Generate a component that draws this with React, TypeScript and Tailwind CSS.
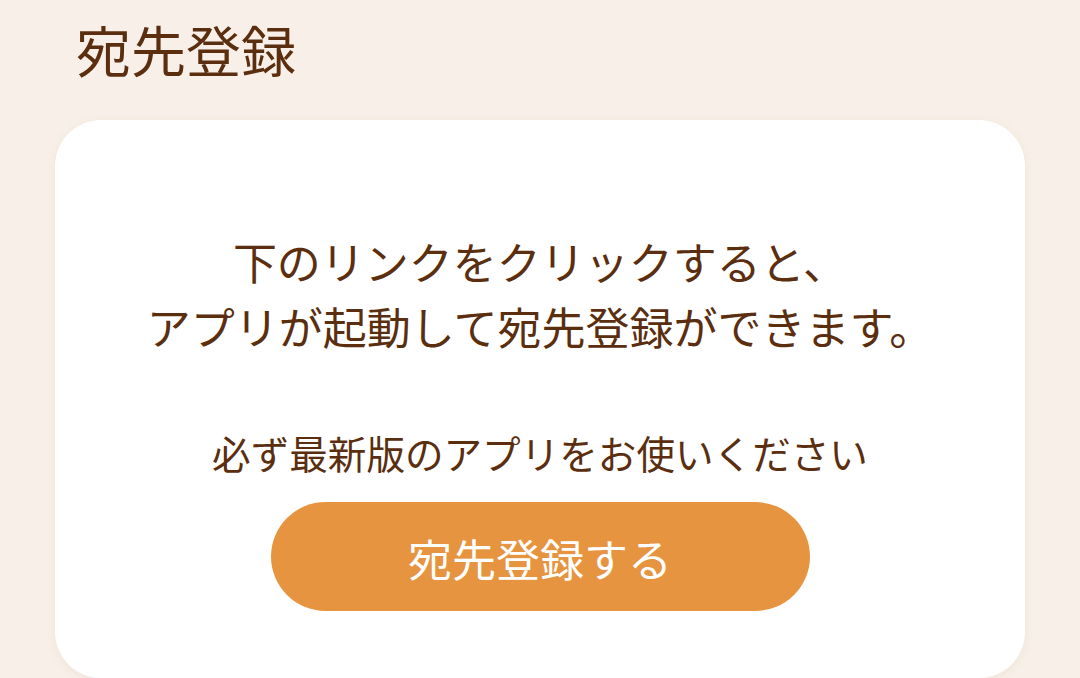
import React from "react";

export default function App() {
  return (
    <div
      className="w-[1080px] h-[678px] overflow-hidden bg-[#f8f0e8] text-[#5a2e0e]"
      style={{ fontFamily: '"Noto Sans CJK JP", "Noto Sans", sans-serif' }}
    >
      <h1 className="pl-[76px] pt-[21px] text-[55px] leading-[55px] font-normal">宛先登録</h1>
      <div className="mx-[55px] mt-[44px] h-[558px] rounded-[46px] bg-white shadow-[0_2px_10px_rgba(120,80,40,0.08)] flex flex-col items-center pt-[109px]">
        <p className="text-[44px] leading-[65px] text-center">
          下のリンクをクリックすると、
          <br />
          アプリが起動して宛先登録ができます。
        </p>
        <p className="mt-[68px] text-[38.6px] leading-[50px] text-center">必ず最新版のアプリをお使いください</p>
        <button className="mt-[25px] w-[539px] h-[109px] rounded-full bg-[#e6943f] text-white text-[44px] leading-none pt-[2px]">
          宛先登録する
        </button>
      </div>
    </div>
  );
}
